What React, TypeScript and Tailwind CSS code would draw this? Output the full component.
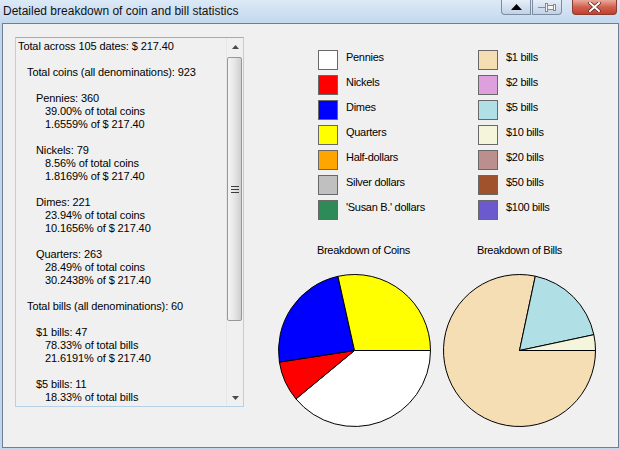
import React from 'react';

type Slice = { value: number; fill: string };

const coinSlices: Slice[] = [
  { value: 360, fill: '#ffffff' },
  { value: 79, fill: '#ff0000' },
  { value: 221, fill: '#0000ff' },
  { value: 263, fill: '#ffff00' },
];

const billSlices: Slice[] = [
  { value: 47, fill: '#f5deb3' },
  { value: 11, fill: '#b0e0e6' },
  { value: 2, fill: '#f5f5dc' },
];

const coinLegend = [
  { label: 'Pennies', swatch: 'bg-[#ffffff]' },
  { label: 'Nickels', swatch: 'bg-[#ff0000]' },
  { label: 'Dimes', swatch: 'bg-[#0000ff]' },
  { label: 'Quarters', swatch: 'bg-[#ffff00]' },
  { label: 'Half-dollars', swatch: 'bg-[#ffa500]' },
  { label: 'Silver dollars', swatch: 'bg-[#c0c0c0]' },
  { label: "'Susan B.' dollars", swatch: 'bg-[#2e8b57]' },
];

const billLegend = [
  { label: '$1 bills', swatch: 'bg-[#f5deb3]' },
  { label: '$2 bills', swatch: 'bg-[#dda0dd]' },
  { label: '$5 bills', swatch: 'bg-[#b0e0e6]' },
  { label: '$10 bills', swatch: 'bg-[#f5f5dc]' },
  { label: '$20 bills', swatch: 'bg-[#bc8f8f]' },
  { label: '$50 bills', swatch: 'bg-[#a0522d]' },
  { label: '$100 bills', swatch: 'bg-[#6a5acd]' },
];

// [indent level, text]; empty text = blank line
const lines: [number, string][] = [
  [0, 'Total across 105 dates: $ 217.40'],
  [0, ''],
  [1, 'Total coins (all denominations): 923'],
  [0, ''],
  [2, 'Pennies: 360'],
  [3, '39.00% of total coins'],
  [3, '1.6559% of $ 217.40'],
  [0, ''],
  [2, 'Nickels: 79'],
  [3, '8.56% of total coins'],
  [3, '1.8169% of $ 217.40'],
  [0, ''],
  [2, 'Dimes: 221'],
  [3, '23.94% of total coins'],
  [3, '10.1656% of $ 217.40'],
  [0, ''],
  [2, 'Quarters: 263'],
  [3, '28.49% of total coins'],
  [3, '30.2438% of $ 217.40'],
  [0, ''],
  [1, 'Total bills (all denominations): 60'],
  [0, ''],
  [2, '$1 bills: 47'],
  [3, '78.33% of total bills'],
  [3, '21.6191% of $ 217.40'],
  [0, ''],
  [2, '$5 bills: 11'],
  [3, '18.33% of total bills'],
];

const indents = ['pl-0', 'pl-[9px]', 'pl-[18px]', 'pl-[27px]'];

function PieChart({ slices }: { slices: Slice[] }) {
  const c = 78.5;
  const r = 76;
  const total = slices.reduce((s, x) => s + x.value, 0);
  let angle = 0;
  const paths = slices.map((s, i) => {
    const start = angle;
    const sweep = (s.value / total) * Math.PI * 2;
    angle += sweep;
    const x1 = c + r * Math.cos(start);
    const y1 = c + r * Math.sin(start);
    const x2 = c + r * Math.cos(angle);
    const y2 = c + r * Math.sin(angle);
    const large = sweep > Math.PI ? 1 : 0;
    return (
      <path
        key={i}
        d={`M ${c} ${c} L ${x1} ${y1} A ${r} ${r} 0 ${large} 1 ${x2} ${y2} Z`}
        fill={s.fill}
        stroke="#000"
        strokeWidth={1}
      />
    );
  });
  return (
    <svg width={157} height={157} viewBox="0 0 157 157" className="block">
      {paths}
    </svg>
  );
}

function Legend({ items }: { items: { label: string; swatch: string }[] }) {
  return (
    <div className="flex flex-col gap-[5px] w-[160px] shrink-0">
      {items.map((it) => (
        <div key={it.label} className="flex h-[20px]">
          <div className={`w-[20px] h-[20px] shrink-0 border border-[#686868] ${it.swatch}`} />
          <span className="ml-[8px] leading-[13px] pt-[1px] whitespace-nowrap">{it.label}</span>
        </div>
      ))}
    </div>
  );
}

function ScrollBar() {
  return (
    <div className="w-[17px] shrink-0 flex flex-col bg-[#f0f0f0] border-l border-[#e6e6e6]">
      <div className="h-[17px] flex items-center justify-center">
        <svg width="7" height="4" viewBox="0 0 7 4">
          <polygon points="3.5,0 7,4 0,4" fill="#4a4a4a" />
        </svg>
      </div>
      <div className="mt-[2px] h-[264px] w-[15px] rounded-[2px] border border-[#979797] bg-linear-to-r from-[#f4f4f4] via-[#e6e6e6] to-[#cfcfcf] flex flex-col items-center justify-center gap-[2px]">
        <div className="w-[8px] h-[1px] bg-[#3c3c3c]" />
        <div className="w-[8px] h-[1px] bg-[#3c3c3c]" />
        <div className="w-[8px] h-[1px] bg-[#3c3c3c]" />
      </div>
      <div className="flex-1" />
      <div className="h-[17px] flex items-center justify-center">
        <svg width="7" height="4" viewBox="0 0 7 4">
          <polygon points="0,0 7,0 3.5,4" fill="#4a4a4a" />
        </svg>
      </div>
    </div>
  );
}

function TitleBar() {
  return (
    <div className="h-[23px] shrink-0 flex justify-between bg-linear-to-b from-[#dce9f6] to-[#c4d8ee]">
      <span className="pl-[3px] pt-[4px] text-[12px] leading-[15px] text-[#111]">
        Detailed breakdown of coin and bill statistics
      </span>
      <div className="flex items-start pr-[3px]">
        <div className="w-[30px] h-[15px] rounded-bl-[4px] border border-t-0 border-[#7c8da3] bg-linear-to-b from-[#e6eef8] to-[#c2d2e6] flex items-center justify-center">
          <svg width="11" height="6" viewBox="0 0 11 6">
            <polygon points="5.5,0 11,6 0,6" fill="#000" />
          </svg>
        </div>
        <div className="ml-[1px] w-[30px] h-[15px] rounded-br-[4px] border border-t-0 border-[#7c8da3] bg-linear-to-b from-[#e6eef8] to-[#c2d2e6] flex items-center justify-center">
          <svg width="18" height="11" viewBox="0 0 18 11">
            <line x1="0" y1="5.5" x2="7" y2="5.5" stroke="#8a8a8a" strokeWidth="1" />
            <rect x="7.5" y="1.5" width="2" height="8" fill="#f4f4f4" stroke="#8a8a8a" />
            <rect x="9.5" y="3.5" width="6" height="4" fill="#f4f4f4" stroke="#8a8a8a" />
            <rect x="15.5" y="2.5" width="2" height="6" fill="#f4f4f4" stroke="#8a8a8a" />
          </svg>
        </div>
        <div className="ml-[10px] w-[45px] h-[15px] rounded-b-[4px] border border-t-0 border-[#8b3b2f] bg-linear-to-b from-[#e9a99b] via-[#d2604e] to-[#c2412f] flex items-center justify-center">
          <svg width="13" height="10" viewBox="0 0 13 10">
            <path d="M2 1 L11 9 M11 1 L2 9" stroke="#5a2a22" strokeWidth="3.5" strokeLinecap="square" />
            <path d="M2 1 L11 9 M11 1 L2 9" stroke="#ffffff" strokeWidth="2" strokeLinecap="square" />
          </svg>
        </div>
      </div>
    </div>
  );
}

export default function App() {
  return (
    <div className="w-[620px] h-[450px] bg-[#c2d6ec] flex flex-col font-['Liberation_Sans',Arial,sans-serif] text-black">
      <TitleBar />
      <div className="ml-[2px] mr-[1px] mb-[2px] flex-1 border border-[#6d7f95] bg-[#f0f0f0] flex">
        {/* statistics text box */}
        <div className="ml-[12px] mt-[13px] w-[229px] h-[370px] shrink-0 border border-[#b6d0e5] border-t-[#8fb0cf] flex overflow-hidden">
          <div className="flex-1 min-w-0 pt-[2px] pl-[2px] text-[11px] leading-[13px] tracking-[-0.1px] overflow-hidden whitespace-nowrap">
            {lines.map(([lvl, text], i) =>
              text ? (
                <div key={i} className={`h-[13px] ${indents[lvl]}`}>{text}</div>
              ) : (
                <div key={i} className="h-[13px]" />
              )
            )}
          </div>
          <ScrollBar />
        </div>

        {/* legend and charts */}
        <div className="flex flex-col shrink-0 text-[11px] tracking-[-0.3px]">
          <div className="ml-[74px] mt-[26px] flex">
            <Legend items={coinLegend} />
            <Legend items={billLegend} />
          </div>
          <div className="ml-[32px] mt-[24px] flex gap-[8px]">
            <div className="flex flex-col items-center">
              <div className="pl-[18px] leading-[13px] whitespace-nowrap">Breakdown of Coins</div>
              <div className="mt-[15px]">
                <PieChart slices={coinSlices} />
              </div>
            </div>
            <div className="flex flex-col items-center">
              <div className="leading-[13px] whitespace-nowrap">Breakdown of Bills</div>
              <div className="mt-[15px]">
                <PieChart slices={billSlices} />
              </div>
            </div>
          </div>
        </div>
      </div>
    </div>
  );
}
